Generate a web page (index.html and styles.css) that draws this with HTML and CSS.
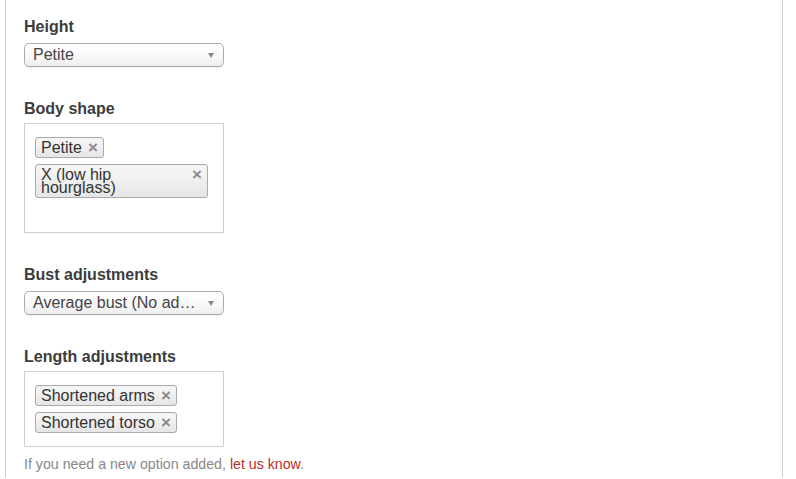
FILE: index.html
```html
<!DOCTYPE html>
<html lang="en">
<head>
  <meta charset="UTF-8">
  <title>Fit profile</title>
  <meta name="viewport" content="width=device-width, initial-scale=1.0">
  <link rel="stylesheet" href="styles.css">
</head>
<body>

  <div class="panel">

    <!-- Height -->
    <div class="field">
      <label class="field-label">Height</label>
      <div class="select">
        <span class="select-text">Petite</span>
        <span class="select-arrow"></span>
      </div>
    </div>

    <!-- Body shape -->
    <div class="field">
      <label class="field-label">Body shape</label>
      <div class="choices choices-tall">
        <span class="tag">Petite<span class="tag-x">&times;</span></span>
        <span class="tag tag-wide">X (low hip hourglass)<span class="tag-x">&times;</span></span>
      </div>
    </div>

    <!-- Bust -->
    <div class="field">
      <label class="field-label">Bust adjustments</label>
      <div class="select">
        <span class="select-text">Average bust (No ad&hellip;</span>
        <span class="select-arrow"></span>
      </div>
    </div>

    <!-- Length -->
    <div class="field">
      <label class="field-label">Length adjustments</label>
      <div class="choices">
        <span class="tag">Shortened arms<span class="tag-x">&times;</span></span>
        <span class="tag">Shortened torso<span class="tag-x">&times;</span></span>
      </div>
      <p class="help">If you need a new option added, <a href="#">let us know</a>.</p>
    </div>

  </div>

</body>
</html>
```

FILE: styles.css
```css
body {
  margin: 0;
  font-family: 'Liberation Sans', Arial, sans-serif;
  background: #fff;
  color: #444;
}

.panel {
  margin-left: 5px;
  width: 778px;
  height: 478px;
  box-sizing: border-box;
  border-left: 1px solid #cfcfcf;
  border-right: 1px solid #cfcfcf;
  padding: 17px 0 0 18px;
}

.field {
  margin-bottom: 32px;
}

.field-label {
  display: block;
  font-size: 16px;
  line-height: 20px;
  font-weight: bold;
  color: #3c3c3c;
  margin-bottom: 6px;
}

.select {
  position: relative;
  width: 200px;
  height: 24px;
  box-sizing: border-box;
  border: 1px solid #aaa;
  border-radius: 5px;
  background: linear-gradient(#ffffff 20%, #eeeeee 100%);
  box-shadow: 0 1px 1px rgba(0,0,0,0.06);
  padding: 0 26px 0 8px;
  font-size: 16px;
  line-height: 22px;
  color: #444;
}

.select-text {
  display: block;
  white-space: nowrap;
}

.select-arrow {
  position: absolute;
  right: 9px;
  top: 9px;
  width: 0;
  height: 0;
  border-left: 3px solid transparent;
  border-right: 3px solid transparent;
  border-top: 5px solid #888;
}

.choices {
  width: 200px;
  box-sizing: border-box;
  border: 1px solid #cfcfcf;
  padding: 13px 15px 13px 10px;
  display: flex;
  flex-direction: column;
  align-items: flex-start;
  gap: 6px;
  margin-top: -2px;
}

.choices-tall {
  height: 110px;
}

.tag {
  position: relative;
  box-sizing: border-box;
  border: 1px solid #aaa;
  border-radius: 3px;
  background: linear-gradient(#f4f4f4 20%, #e6e6e6 100%);
  padding: 3px 21px 3px 5px;
  font-size: 16px;
  line-height: 13px;
  color: #333;
}

.tag-wide {
  width: 100%;
}

.tag-x {
  position: absolute;
  right: 5px;
  top: 3px;
  font-size: 17px;
  font-weight: bold;
  line-height: 13px;
  color: #8a8a8a;
}

.help {
  margin: 9px 0 0;
  font-size: 14.2px;
  color: #888;
}

.help a {
  color: #b8302a;
  text-decoration: none;
}
```
